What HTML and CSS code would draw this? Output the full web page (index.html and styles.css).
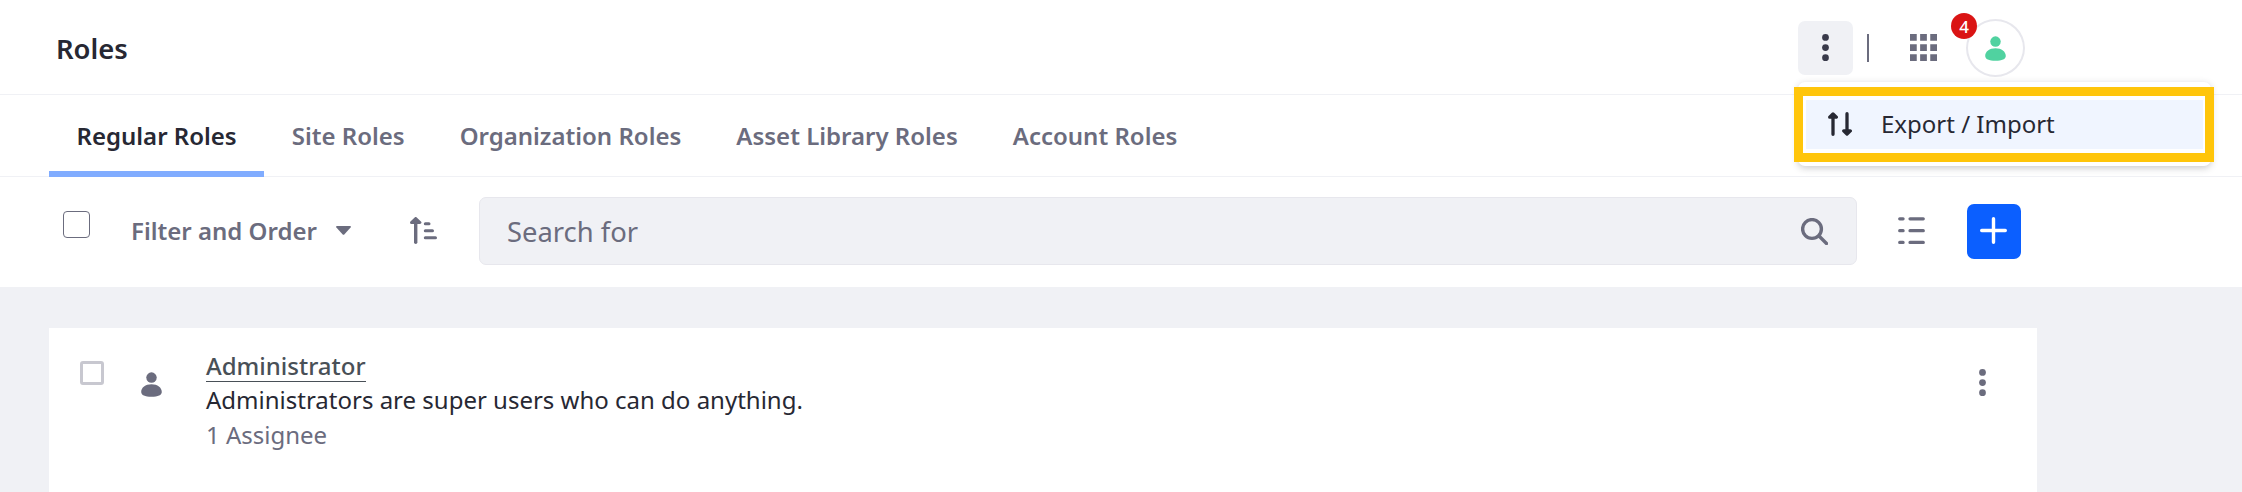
FILE: index.html
```
<!DOCTYPE html>
<html lang="en">
<head>
<meta charset="utf-8">
<title>Roles</title>
<link rel="stylesheet" href="styles.css">
</head>
<body>
<header class="header">
  <h1 class="title">Roles</h1>
  <div class="header-tools">
    <button class="kebab-button" aria-label="Options"><svg class="icon" viewBox="0 0 16 16"><circle cx="8" cy="2" r="2"/><circle cx="8" cy="8" r="2"/><circle cx="8" cy="14" r="2"/></svg></button>
    <span class="divider"></span>
    <svg class="icon apps" viewBox="0 0 16 16"><path d="M0 0h4v4H0zM6 0h4v4H6zM12 0h4v4h-4zM0 6h4v4H0zM6 6h4v4H6zM12 6h4v4h-4zM0 12h4v4H0zM6 12h4v4H6zM12 12h4v4h-4z"/></svg>
    <div class="avatar">
      <svg class="icon" viewBox="0 0 16 16"><circle cx="8" cy="3.9" r="3.1"/><path d="M8 7.800c3.600 0 6.100 1.900 6.100 4.600 0 1.900-2.200 2.800-6.100 2.800s-6.100-.9-6.100-2.800c0-2.700 2.500-4.600 6.100-4.600z"/></svg>
      <span class="badge">4</span>
    </div>
    <div class="menu">
      <div class="menu-item">
        <svg class="icon-menu" viewBox="0 0 24 24"><path d="M5 22.300V2.500M1.700 5.200L5 2l3.300 3.200zM19 1.700v20M15.700 18.800L19 22l3.300-3.200z"/></svg>
        <span class="menu-label">Export / Import</span>
      </div>
      <span class="highlight"></span>
    </div>
  </div>
</header>
<nav class="tabs">
  <a class="tab active">Regular Roles</a>
  <a class="tab">Site Roles</a>
  <a class="tab">Organization Roles</a>
  <a class="tab">Asset Library Roles</a>
  <a class="tab">Account Roles</a>
</nav>
<div class="toolbar">
  <span class="check-all"></span>
  <div class="filter"><span>Filter and Order</span><svg class="caret" viewBox="0 0 15 9"><path d="M1 0h13q1.500.3.600 1.500L8.500 8.200q-1 1-2 0L.4 1.500Q-.5.300 1 0z"/></svg></div>
  <svg class="icon sort" viewBox="0 0 27 27"><path class="stroke-wide" d="M5.700 25.300V3"/><path class="arrow-head" d="M1.500 5.500l4.200-4 4.200 4z"/><path class="stroke-thin" d="M15.300 6.800h3.700M15.300 13.800h7.200M15.300 20.800h10.200"/></svg>
  <div class="search">
    <span>Search for</span>
    <svg class="icon" viewBox="0 0 27 27"><circle class="stroke-wide" cx="11" cy="11" r="9.400"/><path class="stroke-wide" d="M18 18l7.500 7.500"/></svg>
  </div>
  <svg class="icon list" viewBox="0 0 27 27"><path class="stroke-list" d="M1.700 1.800h3.400M12 1.800h13.300M1.700 13.700h3.400M12 13.700h13.300M1.700 25.400h3.400M12 25.400h13.300"/></svg>
  <button class="add" aria-label="Add"><svg class="icon" viewBox="0 0 27 27"><path class="stroke-wide" d="M13.500 1.700v23.600M1.700 13.500h23.600"/></svg></button>
</div>
<main class="content">
  <article class="row">
    <span class="check"></span>
    <svg class="icon person" viewBox="0 0 16 16"><circle cx="8" cy="3.900" r="3.100"/><path d="M8 7.800c3.600 0 6.100 1.900 6.100 4.600 0 1.900-2.200 2.800-6.100 2.800s-6.100-.9-6.100-2.800c0-2.700 2.500-4.600 6.100-4.600z"/></svg>
    <div class="details">
      <a class="name">Administrator</a>
      <div class="description">Administrators are super users who can do anything.</div>
      <div class="assignees">1 Assignee</div>
    </div>
    <svg class="icon row-kebab" viewBox="0 0 16 16"><circle cx="8" cy="2" r="2"/><circle cx="8" cy="8" r="2"/><circle cx="8" cy="14" r="2"/></svg>
  </article>
</main>
</body>
</html>
```
FILE: styles.css
```
* { box-sizing: border-box; }
body {
  margin: 0;
  height: 492px;
  overflow: hidden;
  background: #f0f1f5;
  color: #272833;
  font: 24px/35px "Noto Sans", sans-serif;
}
button { border: 0; padding: 0; }
.icon { display: block; flex: none; width: 27px; height: 27px; fill: currentColor; }
.stroke-wide, .stroke-thin, .stroke-list {
  fill: none;
  stroke: currentColor;
  stroke-width: 3.4;
  stroke-linecap: round;
  stroke-linejoin: round;
}
.stroke-thin { stroke-width: 3; }
.stroke-list { stroke-width: 3.2; }
.arrow-head { stroke: currentColor; stroke-width: 3; stroke-linejoin: round; }

.header {
  display: flex;
  justify-content: space-between;
  height: 95px;
  padding-left: 56px;
  background: #fff;
  border-bottom: 1px solid #f0f1f5;
}
.title { margin: 0; padding-top: 1px; font-size: 27.4px; font-weight: 600; line-height: 96px; }
.header-tools {
  position: relative;
  display: flex;
  align-items: flex-start;
  width: 444px;
  color: #6b6c7e;
}
.kebab-button {
  display: flex;
  align-items: center;
  justify-content: center;
  width: 55px;
  height: 54px;
  margin-top: 21px;
  padding-bottom: 1px;
  border-radius: 7px;
  background: #f0f1f5;
  color: #393a4a;
}
.divider { width: 2px; height: 28px; margin: 34px 0 0 14px; background: #6b6c7e; }
.apps { margin: 34px 0 0 41px; }
.avatar {
  position: relative;
  display: flex;
  align-items: center;
  justify-content: center;
  width: 59px;
  height: 58px;
  margin: 19px 0 0 29px;
  border: 2px solid #e7e7ed;
  border-radius: 50%;
  color: #50d2a0;
}
.badge {
  position: absolute;
  left: -17px;
  top: -8px;
  width: 26px;
  height: 26px;
  border-radius: 50%;
  background: #da1414;
  color: #fff;
  font-size: 17px;
  font-weight: 500;
  line-height: 27px;
  text-align: center;
}
.menu {
  position: absolute;
  z-index: 2;
  left: 0;
  top: 82px;
  width: 413px;
  height: 84px;
  padding: 18px 8px;
  border-radius: 7px;
  background: #fff;
  box-shadow: 0 2px 7px rgba(39, 40, 51, .25);
}
.menu-item {
  display: flex;
  align-items: center;
  gap: 29px;
  height: 49px;
  padding-left: 22px;
  background: #f0f5ff;
  color: #272833;
}
.menu-label { padding-bottom: 2px; }
.icon-menu {
  width: 24px;
  height: 24px;
  margin-top: -1px;
  fill: none;
  stroke: currentColor;
  stroke-width: 3.3;
  stroke-linecap: round;
  stroke-linejoin: round;
}
.highlight {
  position: absolute;
  left: -4px;
  top: 5px;
  width: 420px;
  height: 75px;
  border: 9px solid #ffc50a;
}

.tabs {
  display: flex;
  height: 82px;
  padding-left: 49px;
  background: #fff;
  border-bottom: 1px solid #f0f1f5;
}
.tab { padding: 23px 27.5px 0; color: #6b6c7e; font-weight: 600; }
.tab.active { height: 82px; border-bottom: 6px solid #80acff; color: #272833; }

.toolbar {
  display: flex;
  align-items: flex-start;
  height: 110px;
  padding-left: 63px;
  background: #fff;
  color: #6b6c7e;
}
.check-all {
  width: 27px;
  height: 27px;
  margin-top: 34px;
  border: 1px solid #6b6c7e;
  border-radius: 4px;
}
.filter {
  display: flex;
  align-items: center;
  justify-content: space-between;
  width: 220px;
  margin: 36px 0 0 41px;
  font-weight: 600;
}
.caret { width: 15px; height: 9px; margin-top: -1px; fill: currentColor; }
.sort { margin: 40px 0 0 59px; }
.search {
  display: flex;
  align-items: center;
  justify-content: space-between;
  width: 1378px;
  height: 68px;
  margin: 20px 0 0 42px;
  padding: 0 28px 0 27px;
  border: 1px solid #e7e7ed;
  border-radius: 7px;
  background: #f0f1f5;
  font-size: 27.4px;
}
.list { margin: 40px 0 0 41px; }
.add {
  display: flex;
  align-items: center;
  justify-content: center;
  width: 54px;
  height: 55px;
  margin: 27px 0 0 42px;
  padding: 0 1px 2px 0;
  border-radius: 7px;
  background: #0b5fff;
  color: #fff;
}

.content { padding: 41px 205px 0 49px; }
.row {
  display: flex;
  align-items: flex-start;
  height: 170px;
  padding-left: 31px;
  background: #fff;
}
.check {
  width: 24px;
  height: 24px;
  margin-top: 33px;
  border: 3px solid #c8c8d0;
  border-radius: 3px;
}
.person { margin: 43px 0 0 34px; color: #6b6c7e; }
.details { flex: 1; margin: 20px 0 0 41px; }
.name {
  display: block;
  width: fit-content;
  height: 34px;
  border-bottom: 1px solid #495057;
  color: #495057;
  font-weight: 500;
}
.assignees { color: #6b6c7e; }
.row-kebab { margin: 41px 41px 0 0; color: #6b6c7e; }
```
